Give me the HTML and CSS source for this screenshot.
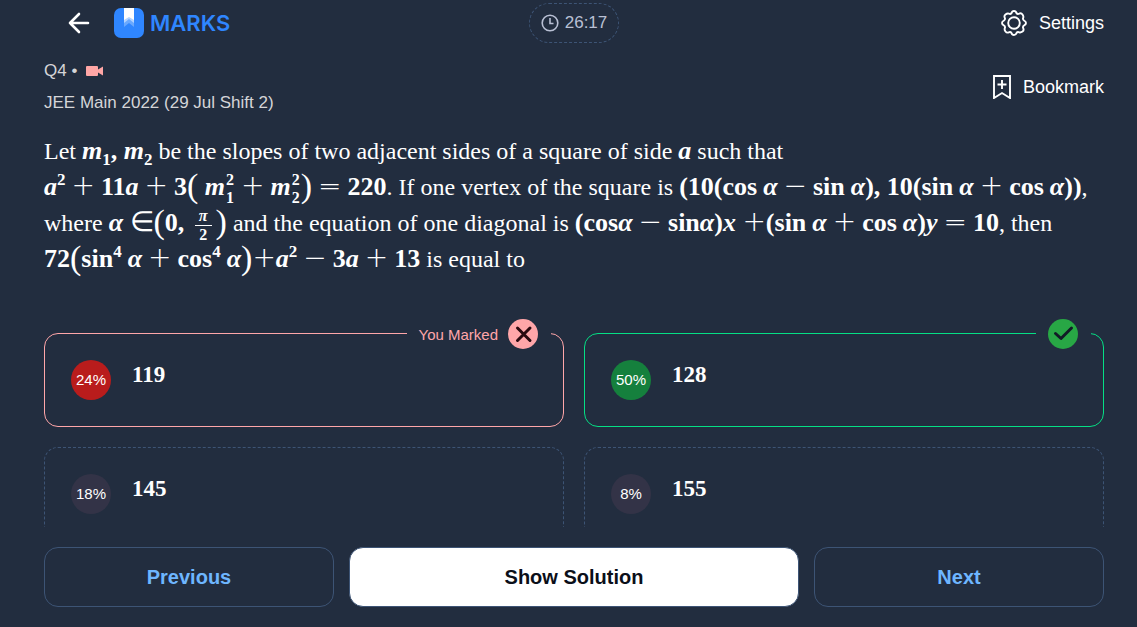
FILE: index.html
```html
<!DOCTYPE html>
<html lang="en">
<head>
    <meta charset="UTF-8">
    <meta name="viewport" content="width=device-width, initial-scale=1.0">
    <title>MARKS - Q4</title>
    <link rel="stylesheet" href="styles.css">
</head>
<body>
    <header class="topbar">
        <div class="brand">
            <button class="icon-btn" type="button" aria-label="Back">
                <svg width="22" height="22" viewBox="0 0 22 22" fill="none" stroke="#fff" stroke-width="2.6" stroke-linecap="round" stroke-linejoin="round">
                    <path d="M20 11H2M11 2L2 11l9 9"/>
                </svg>
            </button>
            <a class="logo" href="#">
                <svg width="30" height="30" viewBox="0 0 30 30">
                    <rect width="30" height="30" rx="7" fill="#2f86ff"/>
                    <path d="M10 9h10v10l-5-4-5 4z" fill="#6aa9ff"/>
                    <path d="M10 6h10v9l-5-4-5 4z" fill="#b5d4ff"/>
                    <path d="M10 0h10v12l-5-3-5 3z" fill="#fff"/>
                </svg>
                <span>MARKS</span>
            </a>
        </div>
        <div class="timer">
            <svg width="18" height="18" viewBox="0 0 18 18" fill="none" stroke="#b9c0d4" stroke-width="1.6">
                <circle cx="9" cy="9" r="7.8"/>
                <path d="M9 4v5.500h3.500"/>
            </svg>
            <span>26:17</span>
        </div>
        <button class="icon-btn settings" type="button">
            <svg width="26" height="26" viewBox="0 0 26 26" fill="none" stroke="#fff" stroke-width="1.9" stroke-linejoin="round">
                <path d="M10.500 3.200Q11 1 13 1T15.500 3.200Q16.500 4.500 18.200 3.700Q20.200 2.700 21.500 4.500T22.200 7.800Q21.500 9.500 23 10.500Q25 11.500 25 13T23 15.500Q21.500 16.500 22.200 18.200Q23.200 20.200 21.500 21.500T18.200 22.300Q16.500 21.500 15.500 23Q15 25 13 25T10.500 23Q9.500 21.500 7.800 22.300Q5.800 23.200 4.500 21.500T3.800 18.200Q4.500 16.500 3 15.500Q1 14.500 1 13T3 10.500Q4.500 9.500 3.800 7.800Q2.800 5.800 4.500 4.500T7.800 3.700Q9.500 4.500 10.500 3.200Z"/>
                <circle cx="13" cy="13" r="5.800"/>
            </svg>
            Settings
        </button>
    </header>

    <main class="content">
        <div class="meta">
            <div>
                <p class="q-number">Q4 •
                    <svg width="18" height="10" viewBox="0 0 18 10" fill="#ffa6a6">
                        <path d="M1 0h10q1 0 1 1v2.500L17 0.500v9L12 6.500V9q0 1-1 1H1q-1 0-1-1V1q0-1 1-1z"/>
                    </svg>
                </p>
                <p class="q-source">JEE Main 2022 (29 Jul Shift 2)</p>
            </div>
            <button class="icon-btn bookmark" type="button">
                <svg width="18" height="24" viewBox="0 0 18 24" fill="none" stroke="#fff" stroke-width="1.9">
                    <path d="M1 1h16v22l-8-5-8 5zM9 5v9M4.500 9.500h9"/>
                </svg>
                Bookmark
            </button>
        </div>

        <p class="question">
            Let <span class="math"><i>m</i><sub>1</sub>, <i>m</i><sub>2</sub></span> be the slopes of two adjacent sides of a square of side <span class="math"><i>a</i></span> such that<br>
            <span class="math"><i>a</i><sup>2</sup><span class="op">+</span>11<i>a</i><span class="op">+</span>3<span class="big">(</span> <i>m</i><span class="stack"><span>2</span><span>1</span></span><span class="op">+</span><i>m</i><span class="stack"><span>2</span><span>2</span></span><span class="big">)</span><span class="op">=</span>220</span>. If one vertex of the square is <span class="math">(10(cos<i class="arg">α</i><span class="op">−</span>sin<i class="arg">α</i>), 10(sin<i class="arg">α</i><span class="op">+</span>cos<i class="arg">α</i>))</span>,<br>
            where <span class="math"><i>α</i> <span class="op tight">∈</span><span class="big">(</span>0, <span class="frac"><i>π</i><span>2</span></span><span class="big">)</span></span> and the equation of one diagonal is <span class="math">(cos<i>α</i><span class="op">−</span>sin<i>α</i>)<i>x</i> <span class="op tight">+</span>(sin<i class="arg">α</i><span class="op">+</span>cos<i class="arg">α</i>)<i>y</i><span class="op">=</span>10</span>, then<br>
            <span class="math">72<span class="big">(</span>sin<sup>4</sup><i class="arg">α</i><span class="op">+</span>cos<sup>4</sup><i class="arg">α</i><span class="big">)</span><span class="op tight">+</span><i>a</i><sup>2</sup><span class="op">−</span>3<i>a</i><span class="op">+</span>13</span> is equal to
        </p>

        <ul class="options">
            <li class="option wrong">
                <div class="mark">
                    <span>You Marked</span>
                    <svg width="30" height="30" viewBox="0 0 30 30">
                        <circle cx="15" cy="15" r="15" fill="#ffa6a9"/>
                        <path d="M9.500 9L22 21.500M22 9L9.500 21.500" stroke="#2b0a10" stroke-width="3" stroke-linecap="round"/>
                    </svg>
                </div>
                <span class="percent">24%</span>
                <span class="answer">119</span>
            </li>
            <li class="option correct">
                <div class="mark">
                    <svg width="30" height="30" viewBox="0 0 30 30">
                        <circle cx="15" cy="15" r="15" fill="#28a745"/>
                        <path d="M7.500 14.500l5.500 5L23.500 9" fill="none" stroke="#111b26" stroke-width="3" stroke-linecap="round" stroke-linejoin="round"/>
                    </svg>
                </div>
                <span class="percent">50%</span>
                <span class="answer">128</span>
            </li>
            <li class="option">
                <span class="percent">18%</span>
                <span class="answer">145</span>
            </li>
            <li class="option">
                <span class="percent">8%</span>
                <span class="answer">155</span>
            </li>
        </ul>
    </main>

    <footer class="actions">
        <button class="nav-btn" type="button">Previous</button>
        <button class="nav-btn solution" type="button">Show Solution</button>
        <button class="nav-btn" type="button">Next</button>
    </footer>
</body>
</html>
```
FILE: styles.css
```css
* {
    box-sizing: border-box;
}
body {
    margin: 0;
    height: 100vh;
    display: flex;
    flex-direction: column;
    background-color: #222d3f;
    color: #fff;
    font-family: "Liberation Sans", Arial, sans-serif;
    font-size: 18px;
}
p, ul {
    margin: 0;
    padding: 0;
}
svg {
    flex: none;
}
button {
    font-family: inherit;
    cursor: pointer;
}
.icon-btn {
    display: flex;
    align-items: center;
    gap: 12px;
    padding: 0;
    border: none;
    background: none;
    color: #fff;
    font-size: 18px;
}

/* top bar */
.topbar {
    display: grid;
    grid-template-columns: 1fr auto 1fr;
    align-items: center;
    height: 46px;
    padding: 0 33px 0 44px;
}
.brand {
    display: flex;
    align-items: center;
    gap: 24px;
    padding-left: 24px;
}
.logo {
    display: flex;
    align-items: center;
    gap: 6px;
    color: #2f86ff;
    font-family: Inter, sans-serif;
    font-size: 22px;
    font-weight: 600;
    text-decoration: none;
}
.timer {
    display: flex;
    align-items: center;
    gap: 6px;
    height: 40px;
    padding: 0 11px;
    border: 1px dashed #3d5475;
    border-radius: 20px;
    color: #b9c0d4;
    font-size: 17px;
}
.settings {
    justify-self: end;
}

/* scrolling part */
.content {
    flex: 1;
    min-height: 0;
    overflow-y: auto;
    scrollbar-width: none;
    padding: 9px 33px 0 44px;
}
.meta {
    display: flex;
    align-items: center;
    justify-content: space-between;
    color: #d5d5d8;
    font-size: 17px;
    line-height: 32px;
}
.q-number svg {
    margin-left: 4px;
}
.question {
    margin-top: 14px;
    font-family: "Liberation Serif", "Times New Roman", serif;
    font-size: 24px;
    line-height: 36px;
    white-space: nowrap;
}

/* formulas */
.math {
    font-size: 26px;
    font-weight: bold;
    line-height: 0;
}
.math sub,
.math sup {
    font-size: 17px;
    line-height: 0;
}
.op {
    display: inline-block;
    margin: 0 6px;
    font-family: "DejaVu Sans", sans-serif;
    font-size: 28px;
    font-weight: 200;
}
.tight {
    margin: 0;
}
.arg {
    margin-left: 6px;
}
.big {
    font-size: 34px;
    font-weight: normal;
    vertical-align: -2px;
}
.stack,
.frac {
    display: inline-flex;
    flex-direction: column;
    font-size: 16px;
    line-height: 18px;
    vertical-align: middle;
}
.stack {
    margin: -4px 1px;
}
.frac {
    margin: -4px 4px;
    text-align: center;
}
.frac i {
    border-bottom: 1px solid #fff;
    padding: 0 4px;
}

/* answers */
.options {
    display: grid;
    grid-template-columns: 1fr 1fr;
    gap: 20px;
    margin-top: 56px;
    list-style: none;
}
.option {
    position: relative;
    display: flex;
    gap: 21px;
    padding: 26px;
    border: 1px dashed #3d5475;
    border-radius: 14px;
}
.percent {
    width: 40px;
    height: 40px;
    border-radius: 50%;
    background-color: #333347;
    font-size: 15px;
    line-height: 40px;
    text-align: center;
}
.answer {
    font-family: "Liberation Serif", "Times New Roman", serif;
    font-size: 23px;
    font-weight: bold;
    line-height: 30px;
}
.wrong {
    border: 1px solid #ffa6a9;
}
.wrong .percent {
    background-color: #b91c1c;
}
.correct {
    border: 1px solid #05df85;
}
.correct .percent {
    background-color: #15803d;
}
.mark {
    position: absolute;
    top: -15px;
    right: 12px;
    display: flex;
    align-items: center;
    gap: 10px;
    padding: 0 13px 0 12px;
    background-color: #222d3f;
    color: #ffa6a9;
    font-size: 15px;
}

/* bottom buttons */
.actions {
    display: grid;
    grid-template-columns: 290fr 450fr 290fr;
    gap: 15px;
    padding: 20px 33px 20px 44px;
}
.nav-btn {
    height: 60px;
    border: 1px solid #3d5475;
    border-radius: 14px;
    background: none;
    color: #6eb6ff;
    font-size: 20px;
    font-weight: bold;
}
.solution {
    background-color: #fff;
    color: #0b0f19;
}
```
